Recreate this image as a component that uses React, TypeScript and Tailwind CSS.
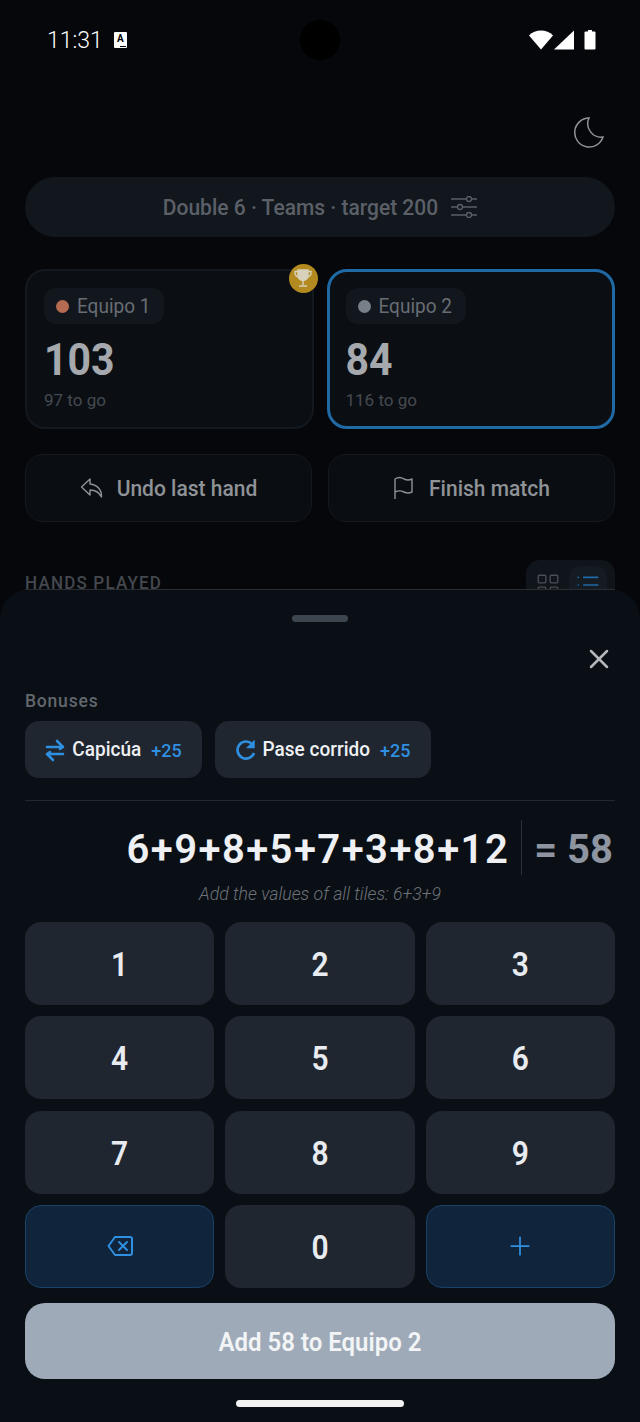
import { LayoutGrid, List, Plus, X } from 'lucide-react';

const KEYS = ['1', '2', '3', '4', '5', '6', '7', '8', '9'];

function StatusBar() {
  return (
    <div className="relative flex h-[80px] items-center justify-between pl-[47px] pr-[44px] text-white">
      <div className="flex items-center gap-[11px]">
        <span className="inline-block scale-y-[1.05] text-[23px] font-light leading-none">11:31</span>
        <span className="relative flex h-[16px] w-[13px] items-start justify-center rounded-[1px] bg-white text-[10px] font-bold leading-[13px] text-black">
          A
          <span className="absolute bottom-[1px] right-[1px] h-px w-[6px] bg-black" />
        </span>
      </div>
      <div className="absolute left-[300px] top-[20px] h-[40px] w-[40px] rounded-full bg-black" />
      <div className="flex items-center">
        <svg width="24" height="20" viewBox="0 0 24 20" fill="white"><path d="M0 5.500C3 2 7.500 .5 12 .5s9 1.500 12 5L12 19.500z" /></svg>
        <svg width="20" height="20" viewBox="0 0 20 20" fill="white" className="mr-[10px] ml-[1px]"><path d="M20 .5v19H0z" /></svg>
        <svg width="12" height="20" viewBox="0 0 12 20" fill="white"><path d="M4 0h4v1.500h2.500a1 1 0 0 1 1 1V18.500a1 1 0 0 1-1 1h-9a1 1 0 0 1-1-1V2.500a1 1 0 0 1 1-1H4z" /></svg>
      </div>
    </div>
  );
}

function TeamCard({ name, score, left, dot, active, trophy }: { name: string; score: number; left: string; dot: string; active?: boolean; trophy?: boolean }) {
  return (
    <div className={`relative flex h-[160px] flex-1 flex-col rounded-[20px] ${active ? 'border-[3px] border-[#1f6aa5] px-[16px] pt-[16px]' : 'border-2 border-[#14191f] px-[17px] pt-[17px]'} bg-[#0b0f14]`}>
      <div className="flex h-[36px] w-fit items-center gap-[8px] rounded-[12px] bg-[#12171d] pl-[12px] pr-[14px]">
        <span className={`h-[13px] w-[13px] rounded-full ${dot}`} />
        <span className="inline-block translate-y-[1px] scale-y-[1.08] text-[19px] text-[#686d74]">{name}</span>
      </div>
      <div className="mt-[10px] inline-block translate-y-[1px] scale-y-[1.06] text-[41px] font-bold leading-[50px] text-[#a5a8ac]">{score}</div>
      <div className="mt-[5px] text-[17px] leading-[22px] text-[#464a50]">{left}</div>
      {trophy && (
        <div className="absolute right-[-6px] top-[-7px] flex h-[29px] w-[29px] items-center justify-center rounded-full bg-[#b38a1f]">
          <svg width="18" height="19" viewBox="0 0 18 19" fill="none" stroke="#d8d2bd" strokeWidth="1.400">
            <path d="M4 1h10v5.500a5 5 0 0 1-10 0z" fill="#d8d2bd" />
            <path d="M4 2.500H1v1.500c0 2 1.500 3.500 3.500 4M14 2.500h3v1.500c0 2-1.500 3.500-3.500 4M9 11.500v4.500M5 17h8" />
          </svg>
        </div>
      )}
    </div>
  );
}

function Numpad() {
  const keyClass = 'flex h-[83px] items-center justify-center rounded-[16px] bg-[#1f262f] text-[30px] font-semibold text-[#e8ebef]';
  const actionClass = 'flex h-[83px] items-center justify-center rounded-[16px] border border-[#1a4168] bg-[#10243c] text-[#2f8fe0]';

  return (
    <div className="mt-[17px] grid grid-cols-3 gap-x-[11px] gap-y-[11.33px]">
      {KEYS.map((key) => (
        <div key={key} className={keyClass}><span className="inline-block translate-y-[1px] scale-y-[1.08]">{key}</span></div>
      ))}
      <div className={actionClass}>
        <svg width="26" height="22" viewBox="0 0 26 22" fill="none" stroke="currentColor" strokeWidth="2" strokeLinejoin="round" strokeLinecap="round">
          <path d="M8 2h15a2 2 0 0 1 2 2v14a2 2 0 0 1-2 2H8l-6.500-9z" />
          <path d="M12 7l8 8M20 7l-8 8" />
        </svg>
      </div>
      <div className={keyClass}><span className="inline-block translate-y-[1px] scale-y-[1.08]">0</span></div>
      <div className={actionClass}><Plus size={30} strokeWidth={1.400} /></div>
    </div>
  );
}

export default function App() {
  return (
    <div className="relative h-[1422px] w-[640px] overflow-hidden bg-[#05070b] font-['Roboto',sans-serif]">
      <StatusBar />

      <div className="px-[25px]">
        <div className="mt-[36px] flex h-[32px] items-center justify-end pr-[11px]">
          <svg width="31" height="31" viewBox="0 0 31 31" fill="none" stroke="#8f9296" strokeWidth="1.500">
            <path d="M16 1A14.500 14.500 0 1 0 30 20A13.500 13.500 0 0 1 16 1z" />
          </svg>
        </div>

        <div className="mt-[29px] flex h-[60px] items-center justify-center gap-[13px] rounded-full bg-[#12171d] text-[#5b6068]">
          <span className="inline-block translate-y-[2px] scale-y-[1.06] text-[21px] font-medium">Double 6 · Teams · target 200</span>
          <svg width="26" height="22" viewBox="0 0 26 22" fill="none" stroke="currentColor" strokeWidth="1.300">
            <path d="M0 3h15M21 3h5M0 11h6M12 11h14M0 19h15M21 19h5" />
            <circle cx="18" cy="3" r="2.500" />
            <circle cx="9" cy="11" r="2.500" />
            <circle cx="18" cy="19" r="2.500" />
          </svg>
        </div>

        <div className="mt-[32px] flex gap-[13px]">
          <TeamCard name="Equipo 1" score={103} left="97 to go" dot="bg-[#b56a52]" trophy />
          <TeamCard name="Equipo 2" score={84} left="116 to go" dot="bg-[#778089]" active />
        </div>

        <div className="mt-[25px] grid grid-cols-2 gap-[16px]">
          <div className="flex h-[68px] items-center justify-center gap-[14px] rounded-[18px] border border-[#14191f] bg-[#0a0e13] text-[#8f9296]">
            <svg width="23" height="22" viewBox="0 0 23 22" fill="none" stroke="currentColor" strokeWidth="1.400" strokeLinejoin="round">
              <path d="M10 2L1.500 10l8.500 8v-5c5 0 9 2 11.500 7c.5-7-4-12-11.500-13z" />
            </svg>
            <span className="inline-block translate-y-[2px] scale-y-[1.06] text-[21px] font-medium">Undo last hand</span>
          </div>
          <div className="flex h-[68px] items-center justify-center gap-[15px] rounded-[18px] border border-[#14191f] bg-[#0a0e13] text-[#8f9296]">
            <svg width="21" height="24" viewBox="0 0 21 24" fill="none" stroke="currentColor" strokeWidth="1.400" strokeLinejoin="round">
              <path d="M2 23V3c3-2 6-2 9 0c3 1.500 5 1.500 8 0v13c-3 1.500-5 1.500-8 0c-3-1.500-6-1.500-9 0" />
            </svg>
            <span className="inline-block translate-y-[2px] scale-y-[1.06] text-[21px] font-medium">Finish match</span>
          </div>
        </div>

        <div className="mt-[38px] flex items-start justify-between">
          <span className="inline-block scale-y-[1.08] pt-[10px] text-[17px] font-medium tracking-[1.200px] text-[#44484e]">HANDS PLAYED</span>
          <div className="flex h-[44px] w-[89px] items-center gap-[3px] rounded-[14px] bg-[#10151b] px-[4px] pt-[6px]">
            <div className="flex h-[36px] w-[36px] items-center justify-center text-[#4b4f55]"><LayoutGrid size={26} strokeWidth={1.200} /></div>
            <div className="flex h-[38px] w-[38px] items-center justify-center rounded-[12px] bg-[#141b22] text-[#1f6aa5]"><List size={26} strokeWidth={1.500} /></div>
          </div>
        </div>
      </div>

      {/* bottom sheet over the page */}
      <div className="absolute inset-x-0 top-[590px] bottom-0 rounded-t-[28px] bg-[#0a0f15] px-[25px]">
        <div className="absolute left-[25px] right-[25px] top-[-1px] h-px bg-[#2a2e33]" />
        <div className="mx-auto mt-[25px] h-[7px] w-[56px] rounded-full bg-[#3d454f]" />

        <div className="mt-[21px] flex justify-end text-[#b5b7ba]">
          <X size={32} strokeWidth={1.900} />
        </div>

        <div className="mt-[14px] text-[17.500px] font-medium leading-[24px] tracking-[0.8px] text-[#62676e]">Bonuses</div>

        <div className="mt-[8px] flex gap-[13px]">
          <div className="flex h-[57px] w-[177px] items-center justify-center gap-[7px] rounded-[14px] bg-[#1f262f]">
            <svg width="20" height="24" viewBox="0 0 20 24" fill="none" stroke="#2f8fe0" strokeWidth="2.600" strokeLinecap="round" strokeLinejoin="round">
              <path d="M2 9h15M12 3l6 6-3 2" />
              <path d="M18 16H3M8 22l-6-6 3-2" />
            </svg>
            <span className="inline-block translate-y-[1px] scale-y-[1.06] text-[19px] font-medium text-[#eef0f3]">Capicúa</span>
            <span className="ml-[3px] inline-block translate-y-[1px] scale-y-[1.06] text-[18px] font-medium text-[#2f8fe0]">+25</span>
          </div>
          <div className="flex h-[57px] w-[216px] items-center justify-center gap-[7px] rounded-[14px] bg-[#1f262f]">
            <svg width="20" height="24" viewBox="0 0 20 24" fill="none" stroke="#2f8fe0" strokeWidth="2.600" strokeLinejoin="round">
              <path d="M16 6a8.500 8.500 0 1 0 2 9" />
              <path d="M18.500 2v8h-8z" fill="#2f8fe0" strokeWidth="0.500" />
            </svg>
            <span className="inline-block translate-y-[1px] scale-y-[1.06] text-[19px] font-medium text-[#eef0f3]">Pase corrido</span>
            <span className="ml-[3px] inline-block translate-y-[1px] scale-y-[1.06] text-[18px] font-medium text-[#2f8fe0]">+25</span>
          </div>
        </div>

        <div className="mt-[22px] h-px bg-[#23282f]" />

        <div className="mt-[19px] flex h-[55px] items-center justify-end">
          <span className="pt-[5px] text-[40px] font-semibold leading-none tracking-[1.450px] text-[#eef0f3]">6+9+8+5+7+3+8+12</span>
          <span className="ml-[12px] mr-[12px] h-[55px] w-px bg-[#2b3138]" />
          <span className="pr-[2px] pt-[5px] text-[40px] font-bold leading-none text-[#8e95a1]">= 58</span>
        </div>

        <div className="mt-[8px] text-center text-[17.700px] font-light italic leading-[22px] text-[#6d7278]">Add the values of all tiles: 6+3+9</div>

        <Numpad />

        <div className="mt-[15px] flex h-[76px] items-center justify-center rounded-[20px] bg-[#9eaab8] font-semibold text-[#f2f4f6]">
          <span className="inline-block translate-y-[2px] scale-y-[1.06] text-[24px]">Add 58 to Equipo 2</span>
        </div>

        <div className="mx-auto mt-[21px] h-[7px] w-[168px] rounded-full bg-[#f2f2f2]" />
      </div>
    </div>
  );
}
